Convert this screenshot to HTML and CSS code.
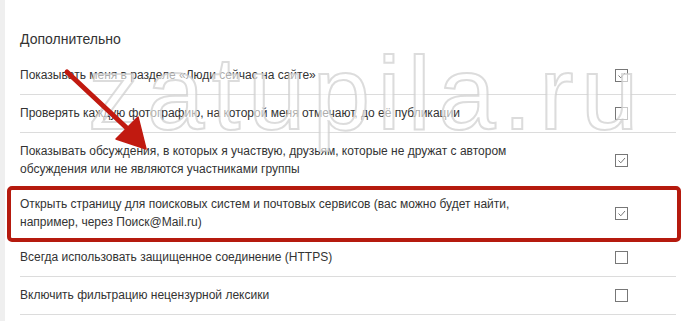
FILE: index.html
```html
<!DOCTYPE html>
<html lang="ru">
<head>
<meta charset="utf-8">
<link rel="stylesheet" href="styles.css">
</head>
<body>
<div class="page">
  <div class="panel">
    <h2 class="title">Дополнительно</h2>
    <div class="row">
      <div class="label">Показывать меня в разделе «Люди сейчас на сайте»</div>
      <span class="cb on"><svg viewBox="0 0 11 11" width="11" height="11"><polyline points="2.5,5.5 4.8,7.8 9,3" /></svg></span>
    </div>
    <div class="row">
      <div class="label">Проверять каждую фотографию, на которой меня отмечают, до её публикации</div>
      <span class="cb"></span>
    </div>
    <div class="row">
      <div class="label">Показывать обсуждения, в которых я участвую, друзьям, которые не дружат с автором<br>обсуждения или не являются участниками группы</div>
      <span class="cb on"><svg viewBox="0 0 11 11" width="11" height="11"><polyline points="2.5,5.5 4.8,7.8 9,3" /></svg></span>
    </div>
    <div class="row row-hl">
      <div class="label">Открыть страницу для поисковых систем и почтовых сервисов (вас можно будет найти,<br>например, через Поиск@Mail.ru)</div>
      <span class="cb on"><svg viewBox="0 0 11 11" width="11" height="11"><polyline points="2.5,5.5 4.8,7.8 9,3" /></svg></span>
      <div class="hl-frame"></div>
    </div>
    <div class="row">
      <div class="label">Всегда использовать защищенное соединение (HTTPS)</div>
      <span class="cb"></span>
    </div>
    <div class="row">
      <div class="label">Включить фильтрацию нецензурной лексики</div>
      <span class="cb"></span>
    </div>
  </div>
  <div class="watermark">zatupila.ru</div>
  <svg class="arrow" width="160" height="160" viewBox="0 0 160 160">
    <line x1="67" y1="72" x2="130" y2="131" class="shaft" />
    <polygon points="146,149 116,139 138,117" class="head" />
  </svg>
</div>
</body>
</html>
```
FILE: styles.css
```css
html, body {
  margin: 0;
  padding: 0;
  background: #efefef;
}
.page {
  position: relative;
  margin-left: 5px;
  width: 687px;
  height: 321px;
  background: #fff;
  overflow: hidden;
  font-family: "Liberation Sans", Arial, sans-serif;
  color: #333;
}
.panel {
  padding: 29px 16px 0 15px;
}
.title {
  margin: 0 0 7px 0;
  font-size: 14px;
  line-height: 20px;
  font-weight: normal;
  color: #333;
}
.row {
  position: relative;
  display: flex;
  align-items: center;
  justify-content: space-between;
  padding: 10px 48px 10px 0;
  border-bottom: 1px solid #dcdcdc;
  font-size: 12px;
  line-height: 18px;
  margin-bottom: -1px;
}
.label {
  flex: 1;
}
.cb {
  flex: none;
  box-sizing: border-box;
  width: 13px;
  height: 13px;
  border: 1px solid #777;
  display: flex;
  align-items: center;
  justify-content: center;
}
.cb svg polyline {
  fill: none;
  stroke: #777;
  stroke-width: 1;
}
.row-hl {
  padding-top: 7px;
  padding-bottom: 7px;
  border-bottom-color: transparent;
}
.hl-frame {
  position: absolute;
  top: -2px;
  left: -13px;
  right: -5px;
  bottom: -4px;
  border: 4px solid #b51a0e;
  border-radius: 5px;
  pointer-events: none;
}
.watermark {
  position: absolute;
  left: 83px;
  top: 42px;
  font-family: "Liberation Sans", Arial, sans-serif;
  font-size: 103px;
  letter-spacing: 7.5px;
  line-height: 1;
  color: rgba(255, 255, 255, 0.6);
  -webkit-text-stroke: 2px rgba(205, 205, 205, 0.7);
  pointer-events: none;
}
.arrow {
  position: absolute;
  left: -5px;
  top: 0;
}
.arrow .shaft {
  stroke: #c11a10;
  stroke-width: 5;
  stroke-linecap: round;
}
.arrow .head {
  fill: #c11a10;
  stroke: #c11a10;
  stroke-width: 1.5;
  stroke-linejoin: round;
}
```
